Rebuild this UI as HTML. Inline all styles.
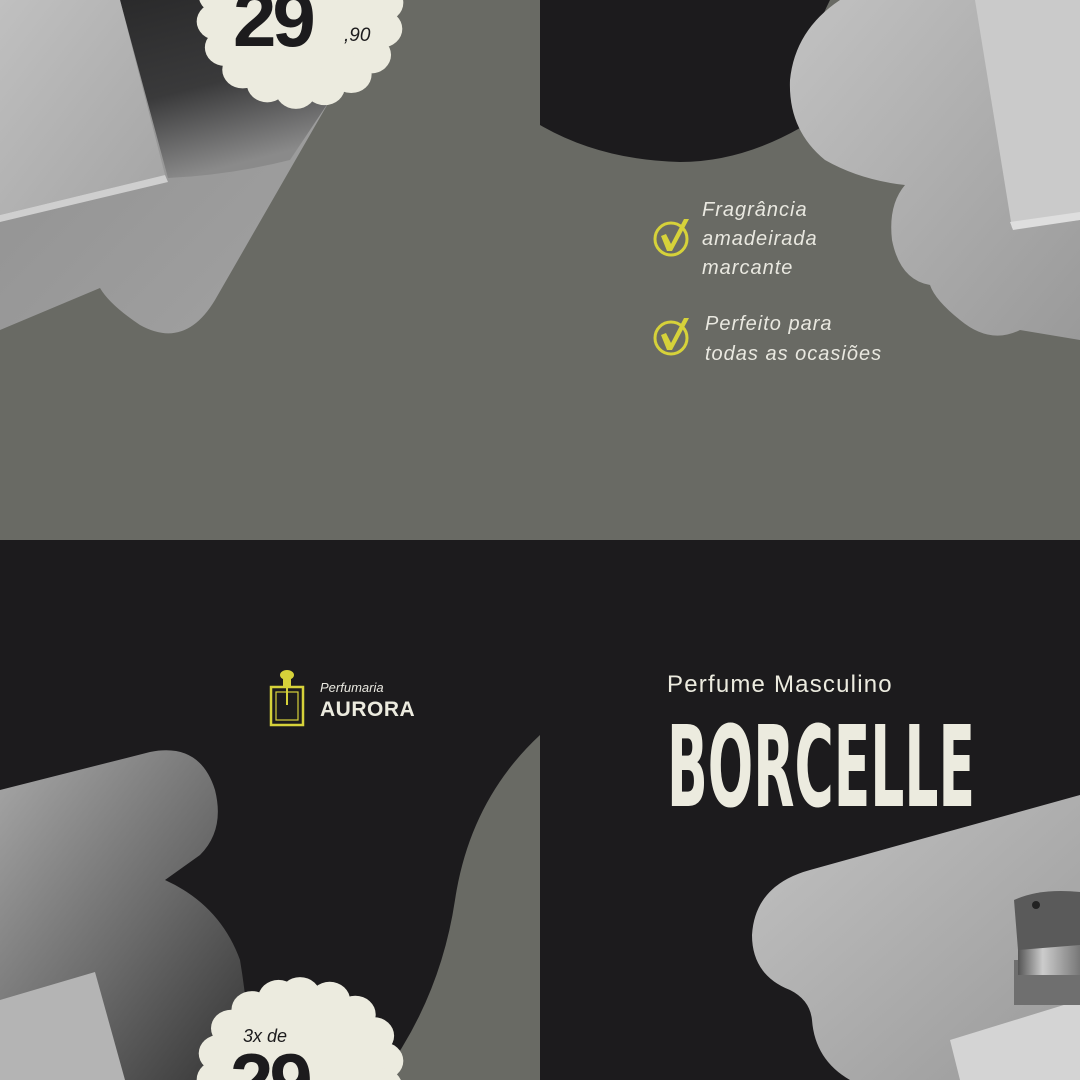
<!DOCTYPE html>
<html><head><meta charset="utf-8"><style>
html,body{margin:0;padding:0;background:#1c1b1d;width:1080px;height:1080px;overflow:hidden}
svg{display:block}
</style></head><body>
<svg width="1080" height="1080" viewBox="0 0 1080 1080" xmlns="http://www.w3.org/2000/svg">
<defs>
<linearGradient id="g1" x1="0" y1="0" x2="1" y2="1"><stop offset="0" stop-color="#8f8f8f"/><stop offset="1" stop-color="#a2a2a2"/></linearGradient>
<linearGradient id="gd" x1="0" y1="0" x2="0.3" y2="1"><stop offset="0" stop-color="#2a2a2b"/><stop offset="0.55" stop-color="#3a3a3b"/><stop offset="1" stop-color="#8a8a8a"/></linearGradient>
<linearGradient id="g2" x1="0" y1="0" x2="1" y2="1"><stop offset="0" stop-color="#c0c0c0"/><stop offset="1" stop-color="#a4a4a4"/></linearGradient>
<linearGradient id="g3" x1="0" y1="0" x2="1" y2="1"><stop offset="0" stop-color="#a8a8a8"/><stop offset="0.55" stop-color="#6a6a6a"/><stop offset="1" stop-color="#333"/></linearGradient>
<linearGradient id="g4" x1="0" y1="0" x2="1" y2="1"><stop offset="0" stop-color="#c2c2c2"/><stop offset="1" stop-color="#9a9a9a"/></linearGradient>
<linearGradient id="cap" x1="0" y1="0" x2="1" y2="0"><stop offset="0" stop-color="#555"/><stop offset="0.4" stop-color="#ccc"/><stop offset="1" stop-color="#777"/></linearGradient>
<g id="badge">
<circle r="82"/>
<g transform="scale(0.93)">
<circle cx="0" cy="-82" r="20"/><circle cx="29" cy="-77" r="20"/><circle cx="54" cy="-62" r="20"/><circle cx="72" cy="-39" r="20"/><circle cx="81" cy="-12" r="20"/><circle cx="80" cy="16" r="20"/><circle cx="69" cy="44" r="20"/><circle cx="50" cy="65" r="20"/><circle cx="24" cy="78" r="20"/><circle cx="-4" cy="82" r="20"/><circle cx="-32" cy="75" r="20"/><circle cx="-56" cy="60" r="20"/><circle cx="-73" cy="36" r="20"/><circle cx="-81" cy="8" r="20"/><circle cx="-79" cy="-20" r="20"/><circle cx="-67" cy="-47" r="20"/><circle cx="-47" cy="-67" r="20"/><circle cx="-21" cy="-79" r="20"/>
</g>
</g>
</defs>

<rect x="0" y="0" width="1080" height="540" fill="#696a64"/>
<rect x="0" y="540" width="1080" height="540" fill="#1c1b1d"/>

<path d="M0 0 L330 0 L330 100 L215 300 Q185 350 140 325 Q110 305 100 288 L0 330 Z" fill="url(#g1)"/>
<path d="M120 0 L330 0 L330 100 L290 160 Q230 175 168 178 Z" fill="url(#gd)"/>
<path d="M0 0 L120 0 L165 175 L0 215 Z" fill="url(#g2)"/>
<path d="M0 215 L165 175 L168 182 L0 222 Z" fill="#cfcfcf"/>

<use href="#badge" x="300" y="14" fill="#ecebdf" transform="translate(-30 0) scale(1.1 1)"/>
<text x="233" y="46" font-family="Liberation Sans, sans-serif" font-weight="bold" font-size="78" fill="#1c1b1d" letter-spacing="-4">29</text>
<text x="344" y="41" font-family="Liberation Sans, sans-serif" font-style="italic" font-size="19" fill="#1c1b1d">,90</text>

<path d="M540 0 L830 0 Q800 60 800 128 Q740 162 680 162 Q600 160 540 125 Z" fill="#1c1b1d"/>
<path d="M840 0 L1080 0 L1080 340 L1020 330 Q990 345 960 320 Q935 300 930 285 Q900 280 892 240 Q888 205 905 185 Q860 180 825 160 Q788 130 790 80 Q795 30 840 0 Z" fill="url(#g4)"/>
<path d="M975 0 L1080 0 L1080 220 L1012 228 Z" fill="#cacaca"/>
<path d="M1010 222 L1080 212 L1080 220 L1013 230 Z" fill="#dedede"/>

<g fill="none" stroke="#d6d23a" stroke-width="3">
<circle cx="671" cy="239" r="16"/>
<circle cx="671" cy="338" r="16"/>
</g>
<g fill="#d6d23a">
<path d="M661 236 L666 234 L671 244 L684 219 L689 219 L672 251 L667 251 Z"/>
<path d="M661 335 L666 333 L671 343 L684 318 L689 318 L672 350 L667 350 Z"/>
</g>
<g font-family="Liberation Sans, sans-serif" font-style="italic" font-size="20" fill="#e9e8e0" letter-spacing="1">
<text x="702" y="216">Fragrância</text>
<text x="702" y="245">amadeirada</text>
<text x="702" y="274">marcante</text>
<text x="705" y="330">Perfeito para</text>
<text x="705" y="360">todas as ocasiões</text>
</g>

<path d="M540 735 Q470 800 455 900 Q440 1000 380 1080 L540 1080 Z" fill="#696a64"/>
<path d="M0 790 L150 752 Q200 742 215 790 Q225 830 200 855 L165 880 Q220 905 240 960 Q250 1020 250 1080 L0 1080 Z" fill="url(#g3)"/>
<path d="M0 1000 L95 972 L125 1080 L0 1080 Z" fill="#b4b4b4"/>
<use href="#badge" x="300" y="1072" fill="#ecebdf" transform="translate(-30 0) scale(1.1 1)"/>
<text x="243" y="1042" font-family="Liberation Sans, sans-serif" font-style="italic" font-size="18" fill="#1c1b1d">3x de</text>
<text x="230" y="1108" font-family="Liberation Sans, sans-serif" font-weight="bold" font-size="78" fill="#1c1b1d" letter-spacing="-4">29</text>

<g>
<ellipse cx="287" cy="675" rx="7" ry="5" fill="#d6d23a"/>
<rect x="283" y="679" width="8" height="8" fill="#d6d23a"/>
<rect x="271" y="687" width="32" height="38" fill="none" stroke="#d6d23a" stroke-width="2.5"/>
<rect x="276" y="692" width="22" height="28" fill="none" stroke="#d6d23a" stroke-width="1.2"/>
<rect x="286" y="687" width="2" height="18" fill="#d6d23a"/>
</g>
<text x="320" y="692" font-family="Liberation Sans, sans-serif" font-style="italic" font-size="13" fill="#e9e8e0">Perfumaria</text>
<text x="320" y="716" font-family="Liberation Sans, sans-serif" font-weight="bold" font-size="21" fill="#ecebdf" letter-spacing="0.5">AURORA</text>

<text x="667" y="692" font-family="Liberation Sans, sans-serif" font-size="24" fill="#ecebdf" letter-spacing="1.2">Perfume Masculino</text>
<text x="667" y="806" font-family="DejaVu Sans Condensed, Liberation Sans Narrow, sans-serif" font-weight="bold" font-size="112" fill="#ecebdf" textLength="308" lengthAdjust="spacingAndGlyphs">BORCELLE</text>

<path d="M1080 795 L810 870 Q755 885 752 935 Q752 975 790 990 Q810 1000 812 1020 Q815 1060 850 1080 L1080 1080 Z" fill="url(#g4)"/>
<path d="M950 1040 L1080 1000 L1080 1080 L960 1080 Z" fill="#d4d4d4"/>
<rect x="1014" y="960" width="66" height="45" fill="#6f6f6f"/>
<rect x="1018" y="940" width="62" height="35" fill="url(#cap)"/>
<path d="M1014 900 Q1040 888 1080 892 L1080 945 L1018 950 Z" fill="#5a5a5a"/>
<circle cx="1036" cy="905" r="4" fill="#222"/>
</svg>
</body></html>
